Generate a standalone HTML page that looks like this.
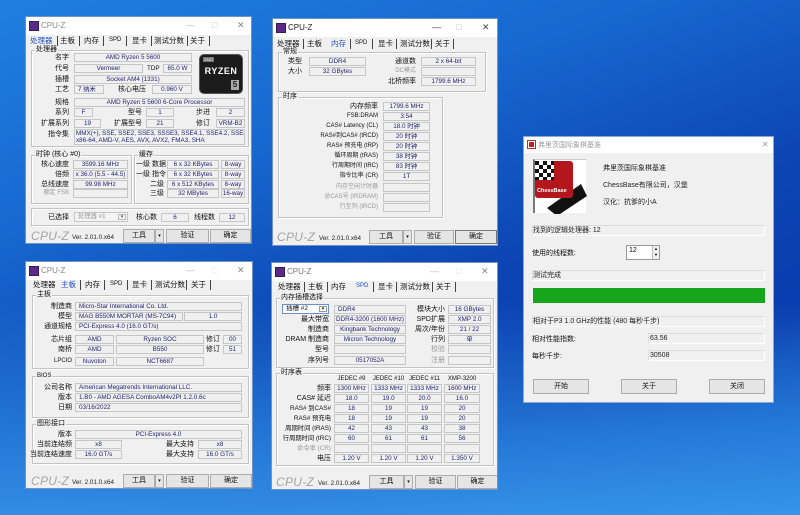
<!DOCTYPE html>
<html><head><meta charset="utf-8">
<style>
*{margin:0;padding:0;box-sizing:border-box}
body{width:800px;height:515px;overflow:hidden;position:relative;font-family:"Liberation Sans","Noto Sans CJK SC",sans-serif;
background:linear-gradient(160deg,#1f7fe0 0%,#1767cf 30%,#0c45b4 55%,#0a3cae 75%,#1a63c9 100%)}
.bg2{position:absolute;left:0;top:300px;width:800px;height:215px;background:linear-gradient(180deg,rgba(60,160,240,0) 0%,rgba(50,150,235,.6) 60%,rgba(60,160,240,.8) 100%)}
.w{position:absolute;background:#f0f0f0;border:1px solid #6f93c4;overflow:hidden}
.tb{position:absolute;left:0;top:0;right:0;height:18px;background:#fff}
.ic{position:absolute;left:3px;top:4px;width:10px;height:10px;background:#5b2a86;border:1px solid #3a1a5a}
.tt{position:absolute;left:15px;top:4px;font-size:8px;color:#222}
.ctl{position:absolute;top:3px;font-size:9px;color:#444}
.a{position:absolute;white-space:nowrap;font-size:7px;line-height:9px;color:#111}
.r{text-align:right}
.gr{color:#9a9a9a}
.f{position:absolute;height:9px;border:1px solid #c6c6c6;background:#f0f0f0;color:#232372;font-size:6.3px;line-height:7px;text-align:center;white-space:nowrap;overflow:hidden}
.fl{text-align:left;padding-left:3px}
.g{position:absolute;border:1px solid #c3c3c3;box-shadow:inset 1px 1px 0 #fff,1px 1px 0 #fff}
.gl{position:absolute;font-size:7px;line-height:8px;background:#f0f0f0;padding:0 1px;top:-5px;left:3px;white-space:nowrap;color:#111}
.tab{position:absolute;font-size:7.5px;line-height:9px;color:#111;white-space:nowrap}
.on{color:#1f4fc4}
.sep{position:absolute;width:1px;height:10px;background:#444}
.logo{position:absolute;font-size:12px;font-style:italic;color:#a4a4a4;letter-spacing:.3px}
.ver{position:absolute;font-size:6.3px;color:#222}
.bt{position:absolute;height:14px;border:1px solid #adadad;background:#e5e5e5;font-size:7px;line-height:12px;text-align:center;color:#111}
</style></head><body>
<div class="bg2"></div>

<!-- Window 1: CPU -->
<div class="w" style="left:25px;top:16px;width:227px;height:228px">
 <div class="tb"></div><div class="ic"></div><div class="tt" style="color:#888">CPU-Z</div>
 <div class="ctl" style="left:160px;color:#bbb">—</div><div class="ctl" style="left:186px;color:#ccc">□</div><div class="ctl" style="left:211px;color:#888">✕</div>
 <div class="tab on" style="left:4px;top:19px">处理器</div><div class="sep" style="left:31px;top:19px"></div>
 <div class="tab" style="left:34px;top:19px">主板</div><div class="sep" style="left:53px;top:19px"></div>
 <div class="tab" style="left:58px;top:19px">内存</div><div class="sep" style="left:77px;top:19px"></div>
 <div class="tab" style="left:83px;top:19px;font-size:6px">SPD</div><div class="sep" style="left:100px;top:19px"></div>
 <div class="tab" style="left:106px;top:19px">显卡</div><div class="sep" style="left:125px;top:19px"></div>
 <div class="tab" style="left:128px;top:19px">测试分数</div><div class="sep" style="left:161px;top:19px"></div>
 <div class="tab" style="left:164px;top:19px">关于</div><div class="sep" style="left:183px;top:19px"></div>

 <div class="g" style="left:5px;top:33px;width:218px;height:97px"><div class="gl">处理器</div></div>
 <div class="a r" style="left:3px;top:36px;width:40px">名字</div>
 <div class="f" style="left:48px;top:36px;width:118px">AMD Ryzen 5 5600</div>
 <div class="a r" style="left:3px;top:47px;width:40px">代号</div>
 <div class="f" style="left:48px;top:47px;width:69px">Vermeer</div>
 <div class="a" style="left:121px;top:47px;font-size:6.3px">TDP</div>
 <div class="f" style="left:137px;top:47px;width:29px">65.0 W</div>
 <div class="a r" style="left:3px;top:58px;width:40px">插槽</div>
 <div class="f" style="left:48px;top:58px;width:118px">Socket AM4 (1331)</div>
 <div class="a r" style="left:3px;top:68px;width:40px">工艺</div>
 <div class="f fl" style="left:48px;top:68px;width:30px">7 纳米</div>
 <div class="a" style="left:92px;top:68px">核心电压</div>
 <div class="f" style="left:126px;top:68px;width:40px">0.960 V</div>
 <div style="position:absolute;left:173px;top:37px;width:44px;height:40px;background:#1b1b1b;border-radius:5px;border:1px solid #555">
  <div style="position:absolute;left:3px;top:2px;font-size:4px;color:#ddd;background:#777;padding:0 1px">AMD</div>
  <div style="position:absolute;left:0;top:11px;width:42px;text-align:center;font-size:9px;font-weight:bold;color:#fff;letter-spacing:.5px">RYZEN</div>
  <div style="position:absolute;right:3px;bottom:3px;width:8px;height:10px;background:#aaa;color:#222;font-size:8px;line-height:10px;text-align:center;font-weight:bold">5</div>
 </div>
 <div class="a r" style="left:3px;top:81px;width:40px">规格</div>
 <div class="f" style="left:48px;top:81px;width:171px">AMD Ryzen 5 5600 6-Core Processor</div>
 <div class="a r" style="left:3px;top:91px;width:40px">系列</div>
 <div class="f" style="left:48px;top:91px;width:19px">F</div>
 <div class="a" style="left:102px;top:91px">型号</div>
 <div class="f" style="left:120px;top:91px;width:28px">1</div>
 <div class="a" style="left:170px;top:91px">步进</div>
 <div class="f" style="left:190px;top:91px;width:29px">2</div>
 <div class="a r" style="left:3px;top:102px;width:40px">扩展系列</div>
 <div class="f" style="left:48px;top:102px;width:27px">19</div>
 <div class="a" style="left:88px;top:102px">扩展型号</div>
 <div class="f" style="left:120px;top:102px;width:28px">21</div>
 <div class="a" style="left:170px;top:102px">修订</div>
 <div class="f" style="left:190px;top:102px;width:29px">VRM-B2</div>
 <div class="a r" style="left:3px;top:113px;width:40px">指令集</div>
 <div class="f fl" style="left:48px;top:112px;width:171px;height:16px;line-height:7px;padding-left:1px">MMX(+), SSE, SSE2, SSE3, SSSE3, SSE4.1, SSE4.2, SSE4A,<br>x86-64, AMD-V, AES, AVX, AVX2, FMA3, SHA</div>

 <div class="g" style="left:5px;top:138px;width:101px;height:49px"><div class="gl">时钟 (核心 #0)</div></div>
 <div class="a r" style="left:3px;top:143px;width:40px">核心速度</div>
 <div class="f" style="left:47px;top:143px;width:55px">3599.16 MHz</div>
 <div class="a r" style="left:3px;top:153px;width:40px">倍频</div>
 <div class="f" style="left:47px;top:153px;width:55px">x 36.0 (5.5 - 44.5)</div>
 <div class="a r" style="left:3px;top:163px;width:40px">总线速度</div>
 <div class="f" style="left:47px;top:163px;width:55px">99.98 MHz</div>
 <div class="a r gr" style="left:3px;top:172px;width:40px;font-size:6px">额定 FSB</div>
 <div class="f" style="left:47px;top:172px;width:55px"></div>
 <div class="g" style="left:108px;top:138px;width:115px;height:49px"><div class="gl">缓存</div></div>
 <div class="a" style="left:110px;top:143px">一级 数据</div><div class="f" style="left:141px;top:143px;width:52px">6 x 32 KBytes</div><div class="f" style="left:195px;top:143px;width:24px">8-way</div>
 <div class="a" style="left:110px;top:153px">一级 指令</div><div class="f" style="left:141px;top:153px;width:52px">6 x 32 KBytes</div><div class="f" style="left:195px;top:153px;width:24px">8-way</div>
 <div class="a r" style="left:110px;top:163px;width:28px">二级</div><div class="f" style="left:141px;top:163px;width:52px">6 x 512 KBytes</div><div class="f" style="left:195px;top:163px;width:24px">8-way</div>
 <div class="a r" style="left:110px;top:172px;width:28px">三级</div><div class="f" style="left:141px;top:172px;width:52px">32 MBytes</div><div class="f" style="left:195px;top:172px;width:24px">16-way</div>

 <div class="g" style="left:5px;top:191px;width:218px;height:18px"></div>
 <div class="a r" style="left:3px;top:196px;width:40px">已选择</div>
 <div class="f fl" style="left:48px;top:195px;width:54px;height:10px;color:#999;background:#f4f4f4">处理器 #1<span style="position:absolute;right:1px;top:1px;width:8px;height:6px;border:1px solid #bbb;font-size:5px;line-height:5px;text-align:center;color:#555">▾</span></div>
 <div class="a" style="left:110px;top:196px">核心数</div>
 <div class="f" style="left:135px;top:196px;width:28px">6</div>
 <div class="a" style="left:168px;top:196px">线程数</div>
 <div class="f" style="left:193px;top:196px;width:26px">12</div>

 <div class="logo" style="left:5px;top:212px">CPU-Z</div>
 <div class="ver" style="left:46px;top:217px">Ver. 2.01.0.x64</div>
 <div class="bt" style="left:97px;top:212px;width:32px">工具</div>
 <div class="bt" style="left:129px;top:212px;width:9px;font-size:5px">▾</div>
 <div class="bt" style="left:140px;top:212px;width:43px">验证</div>
 <div class="bt" style="left:184px;top:212px;width:41px">确定</div>
</div>

<!-- Window 2: Memory -->
<div class="w" style="left:272px;top:18px;width:226px;height:228px">
 <div class="tb"></div><div class="ic"></div><div class="tt">CPU-Z</div>
 <div class="ctl" style="left:159px">—</div><div class="ctl" style="left:183px;color:#bbb">□</div><div class="ctl" style="left:209px">✕</div>
 <div class="tab" style="left:4px;top:20px">处理器</div><div class="sep" style="left:30px;top:20px"></div>
 <div class="tab" style="left:34px;top:20px">主板</div>
 <div class="tab on" style="left:58px;top:20px">内存</div><div class="sep" style="left:77px;top:20px"></div>
 <div class="tab" style="left:82px;top:20px;font-size:6px">SPD</div><div class="sep" style="left:99px;top:20px"></div>
 <div class="tab" style="left:105px;top:20px">显卡</div><div class="sep" style="left:123px;top:20px"></div>
 <div class="tab" style="left:127px;top:20px">测试分数</div><div class="sep" style="left:158px;top:20px"></div>
 <div class="tab" style="left:162px;top:20px">关于</div><div class="sep" style="left:180px;top:20px"></div>

 <div class="g" style="left:5px;top:33px;width:208px;height:40px"><div class="gl">常规</div></div>
 <div class="a" style="left:15px;top:38px">类型</div><div class="f" style="left:36px;top:38px;width:57px">DDR4</div>
 <div class="a" style="left:15px;top:48px">大小</div><div class="f" style="left:36px;top:48px;width:57px">32 GBytes</div>
 <div class="a r" style="left:100px;top:38px;width:43px">通道数</div><div class="f" style="left:148px;top:38px;width:55px">2 x 64-bit</div>
 <div class="a r gr" style="left:100px;top:48px;width:43px;font-size:6px">DC模式</div><div class="f" style="left:148px;top:48px;width:55px"></div>
 <div class="a r" style="left:100px;top:58px;width:43px">北桥频率</div><div class="f" style="left:148px;top:58px;width:55px">1799.6 MHz</div>

 <div class="g" style="left:5px;top:78px;width:165px;height:121px"><div class="gl">时序</div></div>
 <div class="a r" style="left:10px;top:83px;width:95px">内存频率</div><div class="f" style="left:110px;top:83px;width:47px">1799.6 MHz</div>
 <div class="a r" style="left:10px;top:93px;width:95px;font-size:6px">FSB:DRAM</div><div class="f" style="left:110px;top:93px;width:47px">3:54</div>
 <div class="a r" style="left:10px;top:103px;width:95px;font-size:6px">CAS# Latency (CL)</div><div class="f" style="left:110px;top:103px;width:47px">18.0 时钟</div>
 <div class="a r" style="left:10px;top:113px;width:95px;font-size:6px">RAS#到CAS# (tRCD)</div><div class="f" style="left:110px;top:113px;width:47px">20 时钟</div>
 <div class="a r" style="left:10px;top:123px;width:95px;font-size:6px">RAS# 预充电 (tRP)</div><div class="f" style="left:110px;top:123px;width:47px">20 时钟</div>
 <div class="a r" style="left:10px;top:133px;width:95px;font-size:6px">循环周期 (tRAS)</div><div class="f" style="left:110px;top:133px;width:47px">38 时钟</div>
 <div class="a r" style="left:10px;top:143px;width:95px;font-size:6px">行周期时间 (tRC)</div><div class="f" style="left:110px;top:143px;width:47px">83 时钟</div>
 <div class="a r" style="left:10px;top:153px;width:95px;font-size:6px">指令比率 (CR)</div><div class="f" style="left:110px;top:153px;width:47px">1T</div>
 <div class="a r gr" style="left:10px;top:164px;width:95px;font-size:6px">内存空闲计时器</div><div class="f" style="left:110px;top:164px;width:47px"></div>
 <div class="a r gr" style="left:10px;top:174px;width:95px;font-size:6px">总CAS号 (tRDRAM)</div><div class="f" style="left:110px;top:174px;width:47px"></div>
 <div class="a r gr" style="left:10px;top:184px;width:95px;font-size:6px">行至列 (tRCD)</div><div class="f" style="left:110px;top:184px;width:47px"></div>

 <div class="logo" style="left:4px;top:211px">CPU-Z</div>
 <div class="ver" style="left:46px;top:216px">Ver. 2.01.0.x64</div>
 <div class="bt" style="left:96px;top:211px;width:34px">工具</div>
 <div class="bt" style="left:130px;top:211px;width:9px;font-size:5px">▾</div>
 <div class="bt" style="left:141px;top:211px;width:40px">验证</div>
 <div class="bt" style="left:182px;top:211px;width:42px;border-color:#777">确定</div>
</div>

<!-- Window 3: Mainboard -->
<div class="w" style="left:25px;top:261px;width:228px;height:228px">
 <div class="tb"></div><div class="ic"></div><div class="tt" style="color:#888">CPU-Z</div>
 <div class="ctl" style="left:160px;color:#bbb">—</div><div class="ctl" style="left:186px;color:#ddd">□</div><div class="ctl" style="left:211px;color:#888">✕</div>
 <div class="tab" style="left:7px;top:18px">处理器</div>
 <div class="tab on" style="left:35px;top:18px">主板</div><div class="sep" style="left:54px;top:18px"></div>
 <div class="tab" style="left:59px;top:18px">内存</div><div class="sep" style="left:78px;top:18px"></div>
 <div class="tab" style="left:84px;top:18px;font-size:6px">SPD</div><div class="sep" style="left:101px;top:18px"></div>
 <div class="tab" style="left:106px;top:18px">显卡</div><div class="sep" style="left:125px;top:18px"></div>
 <div class="tab" style="left:129px;top:18px">测试分数</div><div class="sep" style="left:160px;top:18px"></div>
 <div class="tab" style="left:165px;top:18px">关于</div><div class="sep" style="left:184px;top:18px"></div>

 <div class="g" style="left:6px;top:33px;width:217px;height:74px"><div class="gl">主板</div></div>
 <div class="a r" style="left:4px;top:40px;width:42px">制造商</div><div class="f fl" style="left:49px;top:40px;width:167px">Micro-Star International Co. Ltd.</div>
 <div class="a r" style="left:4px;top:50px;width:42px">模型</div><div class="f fl" style="left:49px;top:50px;width:108px">MAG B550M MORTAR (MS-7C94)</div><div class="f" style="left:158px;top:50px;width:58px">1.0</div>
 <div class="a r" style="left:4px;top:60px;width:42px">通道规格</div><div class="f fl" style="left:49px;top:60px;width:167px">PCI-Express 4.0 (16.0 GT/s)</div>
 <div class="a r" style="left:4px;top:73px;width:42px">芯片组</div><div class="f" style="left:49px;top:73px;width:39px">AMD</div><div class="f" style="left:90px;top:73px;width:88px">Ryzen SOC</div><div class="a" style="left:180px;top:73px">修订</div><div class="f" style="left:197px;top:73px;width:19px">00</div>
 <div class="a r" style="left:4px;top:83px;width:42px">南桥</div><div class="f" style="left:49px;top:83px;width:39px">AMD</div><div class="f" style="left:90px;top:83px;width:88px">B550</div><div class="a" style="left:180px;top:83px">修订</div><div class="f" style="left:197px;top:83px;width:19px">51</div>
 <div class="a r" style="left:4px;top:95px;width:42px;font-size:6px">LPCIO</div><div class="f" style="left:49px;top:95px;width:39px">Nuvoton</div><div class="f" style="left:90px;top:95px;width:88px">NCT6687</div>

 <div class="g" style="left:6px;top:114px;width:217px;height:42px"><div class="gl" style="font-size:6px">BIOS</div></div>
 <div class="a r" style="left:4px;top:121px;width:42px">公司名称</div><div class="f fl" style="left:49px;top:121px;width:167px">American Megatrends International LLC.</div>
 <div class="a r" style="left:4px;top:131px;width:42px">版本</div><div class="f fl" style="left:49px;top:131px;width:167px">1.B0 - AMD AGESA ComboAM4v2PI 1.2.0.6c</div>
 <div class="a r" style="left:4px;top:141px;width:42px">日期</div><div class="f fl" style="left:49px;top:141px;width:167px">03/16/2022</div>

 <div class="g" style="left:6px;top:162px;width:217px;height:40px"><div class="gl">图形接口</div></div>
 <div class="a r" style="left:4px;top:168px;width:42px">版本</div><div class="f" style="left:49px;top:168px;width:167px">PCI-Express 4.0</div>
 <div class="a r" style="left:0px;top:178px;width:46px">当前连结频</div><div class="f" style="left:49px;top:178px;width:47px">x8</div><div class="a r" style="left:130px;top:178px;width:38px">最大支持</div><div class="f" style="left:172px;top:178px;width:44px">x8</div>
 <div class="a r" style="left:0px;top:188px;width:46px">当前连结速度</div><div class="f" style="left:49px;top:188px;width:47px">16.0 GT/s</div><div class="a r" style="left:130px;top:188px;width:38px">最大支持</div><div class="f" style="left:172px;top:188px;width:44px">16.0 GT/s</div>

 <div class="logo" style="left:5px;top:212px">CPU-Z</div>
 <div class="ver" style="left:46px;top:217px">Ver. 2.01.0.x64</div>
 <div class="bt" style="left:97px;top:212px;width:32px">工具</div>
 <div class="bt" style="left:129px;top:212px;width:9px;font-size:5px">▾</div>
 <div class="bt" style="left:140px;top:212px;width:43px">验证</div>
 <div class="bt" style="left:184px;top:212px;width:42px">确定</div>
</div>

<!-- Window 4: SPD -->
<div class="w" style="left:271px;top:262px;width:227px;height:228px">
 <div class="tb"></div><div class="ic"></div><div class="tt" style="color:#777">CPU-Z</div>
 <div class="ctl" style="left:158px;color:#bbb">—</div><div class="ctl" style="left:184px;color:#ddd">□</div><div class="ctl" style="left:209px;color:#888">✕</div>
 <div class="tab" style="left:6px;top:19px">处理器</div><div class="sep" style="left:32px;top:19px"></div>
 <div class="tab" style="left:36px;top:19px">主板</div><div class="sep" style="left:55px;top:19px"></div>
 <div class="tab" style="left:59px;top:19px">内存</div>
 <div class="tab on" style="left:84px;top:19px;font-size:6px">SPD</div><div class="sep" style="left:101px;top:19px"></div>
 <div class="tab" style="left:106px;top:19px">显卡</div><div class="sep" style="left:124px;top:19px"></div>
 <div class="tab" style="left:128px;top:19px">测试分数</div><div class="sep" style="left:160px;top:19px"></div>
 <div class="tab" style="left:164px;top:19px">关于</div><div class="sep" style="left:183px;top:19px"></div>

 <div class="g" style="left:4px;top:35px;width:218px;height:70px"><div class="gl">内存插槽选择</div></div>
 <div class="f fl" style="left:10px;top:41px;width:47px;height:10px;background:#fff;border-color:#6a8fd0;color:#111;font-size:6.5px">插槽 #2<span style="position:absolute;right:1px;top:1px;width:8px;height:6px;border:1px solid #999;font-size:5px;line-height:5px;text-align:center">▾</span></div>
 <div class="f fl" style="left:62px;top:42px;width:72px">DDR4</div>
 <div class="a r" style="left:130px;top:42px;width:43px">模块大小</div><div class="f" style="left:176px;top:42px;width:43px">16 GBytes</div>
 <div class="a r" style="left:5px;top:52px;width:52px">最大带宽</div><div class="f" style="left:62px;top:52px;width:72px">DDR4-3200 (1600 MHz)</div>
 <div class="a r" style="left:130px;top:52px;width:43px">SPD扩展</div><div class="f" style="left:176px;top:52px;width:43px">XMP 2.0</div>
 <div class="a r" style="left:5px;top:62px;width:52px">制造商</div><div class="f" style="left:62px;top:62px;width:72px">Kingbank Technology</div>
 <div class="a r" style="left:130px;top:62px;width:43px">周次/年份</div><div class="f" style="left:176px;top:62px;width:43px">21 / 22</div>
 <div class="a r" style="left:5px;top:72px;width:52px">DRAM 制造商</div><div class="f" style="left:62px;top:72px;width:72px">Micron Technology</div>
 <div class="a r" style="left:130px;top:72px;width:43px">行列</div><div class="f" style="left:176px;top:72px;width:43px">单</div>
 <div class="a r" style="left:5px;top:82px;width:52px">型号</div><div class="f" style="left:62px;top:82px;width:72px"></div>
 <div class="a r gr" style="left:130px;top:82px;width:43px">校验</div><div class="f" style="left:176px;top:82px;width:43px"></div>
 <div class="a r" style="left:5px;top:93px;width:52px">序列号</div><div class="f" style="left:62px;top:93px;width:72px">0517052A</div>
 <div class="a r gr" style="left:130px;top:93px;width:43px">注册</div><div class="f" style="left:176px;top:93px;width:43px"></div>

 <div class="g" style="left:4px;top:110px;width:218px;height:93px"><div class="gl">时序表</div></div>
 <div class="a" style="left:62px;top:112px;width:35px;text-align:center;font-size:6px">JEDEC #9</div>
 <div class="a" style="left:99px;top:112px;width:35px;text-align:center;font-size:6px">JEDEC #10</div>
 <div class="a" style="left:135px;top:112px;width:35px;text-align:center;font-size:6px">JEDEC #11</div>
 <div class="a" style="left:172px;top:112px;width:36px;text-align:center;font-size:6px">XMP-3200</div>

 <div class="a r" style="left:2px;top:121px;width:57px">频率</div>
 <div class="f" style="left:62px;top:121px;width:35px">1300 MHz</div><div class="f" style="left:99px;top:121px;width:35px">1333 MHz</div><div class="f" style="left:135px;top:121px;width:35px">1333 MHz</div><div class="f" style="left:172px;top:121px;width:36px">1600 MHz</div>
 <div class="a r" style="left:2px;top:131px;width:57px">CAS# 延迟</div>
 <div class="f" style="left:62px;top:131px;width:35px">18.0</div><div class="f" style="left:99px;top:131px;width:35px">19.0</div><div class="f" style="left:135px;top:131px;width:35px">20.0</div><div class="f" style="left:172px;top:131px;width:36px">16.0</div>
 <div class="a r" style="left:2px;top:141px;width:57px;font-size:6.3px">RAS# 到CAS#</div>
 <div class="f" style="left:62px;top:141px;width:35px">18</div><div class="f" style="left:99px;top:141px;width:35px">19</div><div class="f" style="left:135px;top:141px;width:35px">19</div><div class="f" style="left:172px;top:141px;width:36px">20</div>
 <div class="a r" style="left:2px;top:151px;width:57px;font-size:6.3px">RAS# 预充电</div>
 <div class="f" style="left:62px;top:151px;width:35px">18</div><div class="f" style="left:99px;top:151px;width:35px">19</div><div class="f" style="left:135px;top:151px;width:35px">19</div><div class="f" style="left:172px;top:151px;width:36px">20</div>
 <div class="a r" style="left:2px;top:161px;width:57px;font-size:6.3px">周期时间 (tRAS)</div>
 <div class="f" style="left:62px;top:161px;width:35px">42</div><div class="f" style="left:99px;top:161px;width:35px">43</div><div class="f" style="left:135px;top:161px;width:35px">43</div><div class="f" style="left:172px;top:161px;width:36px">38</div>
 <div class="a r" style="left:0px;top:171px;width:59px;font-size:6.3px">行周期时间 (tRC)</div>
 <div class="f" style="left:62px;top:171px;width:35px">60</div><div class="f" style="left:99px;top:171px;width:35px">61</div><div class="f" style="left:135px;top:171px;width:35px">61</div><div class="f" style="left:172px;top:171px;width:36px">56</div>
 <div class="a r gr" style="left:2px;top:181px;width:57px;font-size:6.3px">命令率 (CR)</div>
 <div class="f" style="left:62px;top:181px;width:35px"></div><div class="f" style="left:99px;top:181px;width:35px"></div><div class="f" style="left:135px;top:181px;width:35px"></div><div class="f" style="left:172px;top:181px;width:36px"></div>
 <div class="a r" style="left:2px;top:191px;width:57px">电压</div>
 <div class="f" style="left:62px;top:191px;width:35px">1.20 V</div><div class="f" style="left:99px;top:191px;width:35px">1.20 V</div><div class="f" style="left:135px;top:191px;width:35px">1.20 V</div><div class="f" style="left:172px;top:191px;width:36px">1.350 V</div>

 <div class="logo" style="left:4px;top:212px">CPU-Z</div>
 <div class="ver" style="left:46px;top:217px">Ver. 2.01.0.x64</div>
 <div class="bt" style="left:97px;top:212px;width:35px">工具</div>
 <div class="bt" style="left:132px;top:212px;width:9px;font-size:5px">▾</div>
 <div class="bt" style="left:143px;top:212px;width:41px">验证</div>
 <div class="bt" style="left:185px;top:212px;width:41px">确定</div>
</div>

<!-- Window 5: Fritz chess benchmark -->
<div class="w" style="left:523px;top:136px;width:251px;height:267px;border-color:#8aa8d0">
 <div class="tb" style="height:16px"></div>
 <div style="position:absolute;left:3px;top:3px;width:9px;height:9px;border:1px solid #a33;background:#fff"><div style="margin:1px;width:5px;height:5px;background:#b22"></div></div>
 <div class="a" style="left:14px;top:4px;color:#999">弗里茨国际象棋基准</div>
 <div class="a" style="left:238px;top:3px;color:#999;font-size:8px">✕</div>

 <div style="position:absolute;left:9px;top:22px;width:53px;height:54px;background:#fff;border-left:2px solid #777;border-top:1px solid #ccc">
  <svg width="53" height="54" viewBox="0 0 53 54" style="position:absolute;left:0;top:0">
   <path d="M12 48 L46 24 L52 36 L22 56 Z" fill="#111"/>
   <rect x="0" y="1" width="38" height="37" rx="3" fill="#b3161b"/>
   <rect x="0" y="1" width="19" height="19" fill="#fff"/>
   <g fill="#111">
    <rect x="0" y="1" width="4" height="4"/><rect x="8" y="1" width="4" height="4"/><rect x="16" y="1" width="3" height="4"/>
    <rect x="4" y="5" width="4" height="4"/><rect x="12" y="5" width="4" height="4"/>
    <rect x="0" y="9" width="4" height="4"/><rect x="8" y="9" width="4" height="4"/><rect x="16" y="9" width="3" height="4"/>
    <rect x="4" y="13" width="4" height="4"/><rect x="12" y="13" width="4" height="4"/>
    <rect x="0" y="17" width="4" height="3"/><rect x="8" y="17" width="4" height="3"/><rect x="16" y="17" width="3" height="3"/>
   </g>
   <text x="2" y="32" font-size="5.5" font-weight="bold" fill="#fff" font-family="Liberation Sans, sans-serif">ChessBase</text>
  </svg>
 </div>
 <div class="a" style="left:79px;top:27px;color:#222">弗里茨国际象棋基准</div>
 <div class="a" style="left:79px;top:44px;color:#222">ChessBase有限公司，汉堡</div>
 <div class="a" style="left:79px;top:61px;color:#222">汉化：抗爹的小A</div>

 <div class="f fl" style="left:8px;top:88px;width:233px;height:11px;line-height:9px;color:#222;font-size:7px;padding-left:0;border-color:#ddd #fff #fff #ddd">找到的逻辑处理器: 12</div>
 <div class="a" style="left:8px;top:112px">使用的线程数:</div>
 <div style="position:absolute;left:102px;top:108px;width:34px;height:15px;background:#fff;border:1px solid #999;font-size:7px;padding:1px 2px">12
  <div style="position:absolute;right:0;top:0;width:7px;height:13px;border-left:1px solid #bbb;font-size:4px;line-height:6px;text-align:center;background:#f0f0f0">▲<br>▼</div></div>
 <div class="f fl" style="left:8px;top:133px;width:233px;height:11px;line-height:9px;color:#222;font-size:7px;padding-left:0;border-color:#ddd #fff #fff #ddd">测试完成</div>
 <div style="position:absolute;left:9px;top:151px;width:232px;height:15px;background:#17a51b"></div>
 <div class="f fl" style="left:8px;top:179px;width:233px;height:11px;line-height:9px;color:#222;font-size:7px;padding-left:0;border-color:#ddd #fff #fff #ddd">相对于P3 1.0 GHz的性能 (480 每秒千步)</div>
 <div class="a" style="left:8px;top:198px">相对性能指数:</div>
 <div class="f fl" style="left:124px;top:196px;width:117px;height:11px;line-height:9px;color:#222;font-size:7px;padding-left:1px;border-color:#ddd #fff #fff #ddd">63.56</div>
 <div class="a" style="left:8px;top:215px">每秒千步:</div>
 <div class="f fl" style="left:124px;top:213px;width:117px;height:11px;line-height:9px;color:#222;font-size:7px;padding-left:1px;border-color:#ddd #fff #fff #ddd">30508</div>
 <div class="bt" style="left:9px;top:242px;width:56px;height:15px;line-height:13px">开始</div>
 <div class="bt" style="left:97px;top:242px;width:56px;height:15px;line-height:13px">关于</div>
 <div class="bt" style="left:185px;top:242px;width:56px;height:15px;line-height:13px">关闭</div>
</div>
</body></html>
